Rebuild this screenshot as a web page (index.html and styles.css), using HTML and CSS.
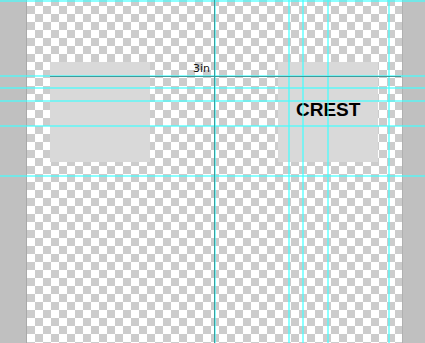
FILE: index.html
```html
<!DOCTYPE html>
<html lang="en">
<head>
  <meta charset="UTF-8">
  <title>Canvas guides</title>
  <link rel="stylesheet" href="styles.css">
</head>
<body>
  <div class="strip strip-left"></div>

  <div class="canvas">
    <div class="box"></div>
    <div class="box box-crest">
      <span class="crest">CREST</span>
    </div>
  </div>

  <div class="strip strip-right"></div>

  <!-- guides drawn over everything -->
  <div class="guides">
    <div class="gh gh-0"></div>
    <div class="gh gh-75"></div>
    <div class="gh gh-87"></div>
    <div class="gh gh-100"></div>
    <div class="gh gh-125"></div>
    <div class="gh gh-175"></div>

    <div class="gv gv-214"></div>
    <div class="gv gv-288"></div>
    <div class="gv gv-302"></div>
    <div class="gv gv-327"></div>
    <div class="gv gv-388"></div>

    <div class="measure-h"></div>
    <div class="measure-v"></div>
    <span class="measure-label">3in</span>
  </div>
</body>
</html>
```

FILE: styles.css
```css
html, body {
  margin: 0;
  height: 343px;
  overflow: hidden;
}
body {
  display: flex;
  position: relative;
  font-family: 'Liberation Sans', Arial, sans-serif;
  background: #c0c0c0;
}
.strip {
  background: #c0c0c0;
  height: 100%;
}
.strip-left {
  width: 26px;
  border-right: 1px solid #a9a9a9;
}
.strip-right {
  width: 22px;
  border-left: 1px solid #b0b0b0;
}
.canvas {
  flex: 1;
  display: flex;
  align-items: flex-start;
  gap: 128px;
  padding: 62px 0 0 23px;
  background: conic-gradient(#fff 25%, #ccc 0 50%, #fff 0 75%, #ccc 0);
  background-size: 16px 16px;
  background-position: 0 6px;
}
.box {
  width: 100px;
  height: 100px;
  background: #d9d9d9;
  flex-shrink: 0;
}
.box-crest {
  box-sizing: border-box;
  padding: 38px 0 0 18px;
}
.crest {
  display: block;
  font-size: 19px;
  line-height: 19px;
  font-weight: bold;
  color: #000;
}

/* guides */
.guides {
  position: absolute;
  inset: 0;
  pointer-events: none;
}
.gh, .gv {
  position: absolute;
  background: rgba(64, 255, 255, 0.6);
}
.gh {
  left: 0;
  right: 0;
  height: 2px;
}
.gv {
  top: 0;
  bottom: 0;
  width: 2px;
}
.gh-0 { top: 0; }
.gh-75 { top: 75px; }
.gh-87 { top: 87px; }
.gh-100 { top: 100px; }
.gh-125 { top: 125px; }
.gh-175 { top: 175px; }
.gv-214 { left: 214px; }
.gv-288 { left: 288px; }
.gv-302 { left: 302px; }
.gv-327 { left: 327px; }
.gv-388 { left: 388px; }

.measure-h {
  position: absolute;
  top: 76px;
  left: 50px;
  width: 351px;
  height: 1px;
  background: #3f9c9c;
}
.measure-v {
  position: absolute;
  top: 0;
  bottom: 0;
  left: 214px;
  width: 1px;
  background: #3f9c9c;
}
.measure-label {
  position: absolute;
  top: 63px;
  left: 193px;
  font-family: 'DejaVu Sans', sans-serif;
  font-size: 11px;
  line-height: 11px;
  color: #111;
}
```
